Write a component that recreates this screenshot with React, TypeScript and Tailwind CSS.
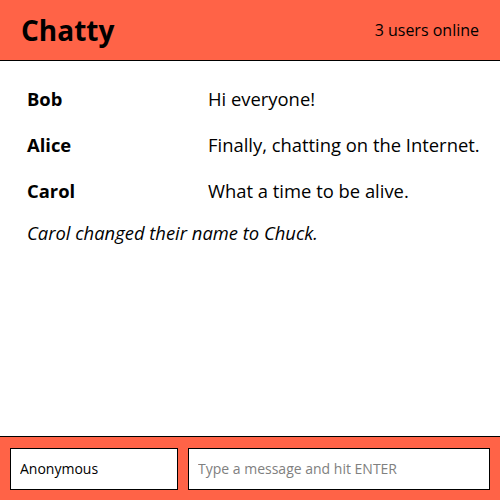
export default function App() {
  const messages = [
    { user: "Bob", text: "Hi everyone!" },
    { user: "Alice", text: "Finally, chatting on the Internet." },
    { user: "Carol", text: "What a time to be alive." },
  ];
  return (
    <div className="flex h-[500px] w-[500px] flex-col bg-white text-black" style={{ fontFamily: "'Open Sans', sans-serif" }}>
      <nav className="flex h-[61px] shrink-0 items-center justify-between border-b border-black bg-[#ff6347] pl-[21px] pr-[21px]">
        <span className="text-[28px] font-bold leading-none">Chatty</span>
        <span className="text-[16px]">3 users online</span>
      </nav>
      <main className="flex-1 pl-[27px] pr-[10px] pt-[15px]">
        {messages.map((m) => (
          <div key={m.user} className="flex h-[46px] items-center whitespace-nowrap text-[18.4px]">
            <span className="w-[181px] font-bold">{m.user}</span>
            <span>{m.text}</span>
          </div>
        ))}
        <div className="flex h-[38px] items-center text-[18.4px] italic">Carol changed their name to Chuck.</div>
      </main>
      <footer className="flex h-[64px] shrink-0 items-center gap-[10px] border-t border-black bg-[#ff6347] px-[10px]">
        <input
          className="h-[42px] w-[168px] border border-black bg-white px-[9px] text-[14px] outline-none"
          defaultValue="Anonymous"
        />
        <input
          className="h-[42px] flex-1 border border-black bg-white px-[9px] text-[14px] outline-none placeholder:text-[#808080]"
          placeholder="Type a message and hit ENTER"
        />
      </footer>
    </div>
  );
}
